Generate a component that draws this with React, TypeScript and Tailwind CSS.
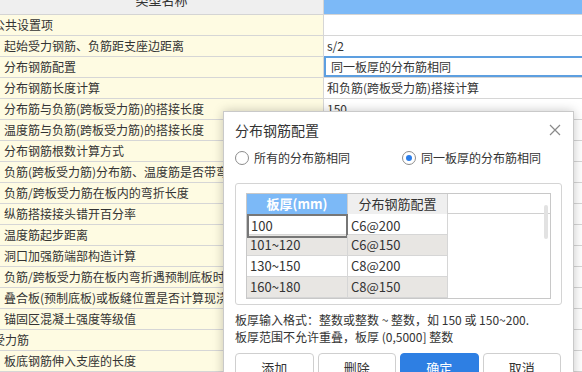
import React from "react";

const rows: { label: string; value?: string; group?: boolean; editing?: boolean }[] = [
  { label: "公共设置项", group: true },
  { label: "起始受力钢筋、负筋距支座边距离", value: "s/2" },
  { label: "分布钢筋配置", value: "同一板厚的分布筋相同", editing: true },
  { label: "分布钢筋长度计算", value: "和负筋(跨板受力筋)搭接计算" },
  { label: "分布筋与负筋(跨板受力筋)的搭接长度", value: "150" },
  { label: "温度筋与负筋(跨板受力筋)的搭接长度", value: "ll" },
  { label: "分布钢筋根数计算方式", value: "向上取整+1" },
  { label: "负筋(跨板受力筋)分布筋、温度筋是否带弯勾", value: "否" },
  { label: "负筋/跨板受力筋在板内的弯折长度", value: "板厚-2*保护层" },
  { label: "纵筋搭接接头错开百分率", value: "50%" },
  { label: "温度筋起步距离", value: "s" },
  { label: "洞口加强筋端部构造计算", value: "伸入支座" },
  { label: "负筋/跨板受力筋在板内弯折遇预制底板时", value: "是" },
  { label: "叠合板(预制底板)或板缝位置是否计算现浇", value: "是" },
  { label: "锚固区混凝土强度等级值", value: "取自身混凝土强度等级" },
  { label: "受力筋", group: true },
  { label: "板底钢筋伸入支座的长度", value: "max(ha/2,5*d)" },
];

const tableRows = [
  ["100", "C6@200"],
  ["101~120", "C6@150"],
  ["130~150", "C8@200"],
  ["160~180", "C8@150"],
];

export default function App() {
  return (
    <div className="relative w-[582px] h-[372px] overflow-hidden bg-white text-[12px] text-[#333] font-['Noto_Sans_CJK_SC','Noto_Sans',sans-serif]">
      {/* main property grid */}
      <div className="-mt-[14px] flex flex-col">
        <div className="grid grid-cols-[324px_1fr] h-[29px] border-b border-[#d4d4d4]">
          <div className="flex items-center justify-center bg-[#efefef] border-r border-[#d4d4d4] text-[13px] text-[#333]">
            类型名称
          </div>
          <div className="bg-[#7cb9f7]" />
        </div>
        {rows.map((r, i) => (
          <div key={i} className="grid grid-cols-[324px_1fr] h-[21px] border-b border-[#d6d6d6]">
            <div className="flex items-center bg-[#fefbe2] border-r border-[#d6d6d6] overflow-hidden whitespace-nowrap">
              <span className={r.group ? "-ml-[7px]" : "pl-[4px]"}>{r.label}</span>
            </div>
            {r.editing ? (
              <div className="flex items-center -mt-px -mr-[6px] h-[21px] border-2 border-[#5d9fe0] pl-[5px] whitespace-nowrap overflow-hidden">
                {r.value}
              </div>
            ) : (
              <div className="flex items-center pl-[3px] whitespace-nowrap overflow-hidden">{r.value ?? ""}</div>
            )}
          </div>
        ))}
      </div>

      {/* dialog */}
      <div className="absolute left-[223px] top-[111px] w-[351px] h-[290px] bg-white border border-[#c9c9c9] shadow-[0_0_10px_rgba(0,0,0,0.22)] flex flex-col px-[11px]">
        <div className="flex items-center justify-between h-[36px]">
          <span className="text-[14px] text-[#333]">分布钢筋配置</span>
          <svg width="12" height="12" viewBox="0 0 12 12" className="mr-[1px]">
            <path d="M1 1 L11 11 M11 1 L1 11" stroke="#8a8a8a" strokeWidth="1.2" fill="none" />
          </svg>
        </div>
        <div className="flex items-center h-[20px]">
          <label className="flex items-center w-[167px]">
            <span className="w-[14px] h-[14px] rounded-full border border-[#8c8c8c] bg-white mr-[5px]" />
            <span>所有的分布筋相同</span>
          </label>
          <label className="flex items-center">
            <span className="w-[14px] h-[14px] rounded-full border border-[#8c8c8c] bg-white mr-[5px] flex items-center justify-center">
              <span className="w-[6px] h-[6px] rounded-full bg-[#2b7de9]" />
            </span>
            <span>同一板厚的分布筋相同</span>
          </label>
        </div>
        <div className="mt-[15px] border border-[#d4d4d4] rounded-[3px] pt-[9px] px-[10px] pb-[5px]">
          <div className="relative h-[106px] border border-[#c8c8c8] overflow-hidden text-[13px]">
            <div className="grid grid-cols-[101px_100px] h-[20px] border-b border-[#d0d0d0]">
              <div className="flex items-center justify-center bg-[#7cb9f7] text-white font-bold border-r border-[#d0d0d0]">
                板厚(mm)
              </div>
              <div className="flex items-center justify-center bg-[#efefef] text-[#333] border-r border-[#d0d0d0]">
                分布钢筋配置
              </div>
            </div>
            {tableRows.map((tr, i) => (
              <div
                key={i}
                className={`grid grid-cols-[101px_100px] h-[21px] border-b border-[#d6d6d6] w-[201px] ${
                  i % 2 === 1 ? "bg-[#e8e6e3]" : "bg-white"
                }`}
              >
                <div
                  className={`flex items-center pl-[2px] ${
                    i === 0 ? "border-2 border-[#777] -mb-px" : "border-r border-[#d6d6d6] pl-[3px]"
                  }`}
                >
                  {tr[0]}
                </div>
                <div className="flex items-center pl-[3px] border-r border-[#d6d6d6]">{tr[1]}</div>
              </div>
            ))}
            <div className="absolute left-[297px] top-[11px] w-[4px] h-[34px] rounded-full bg-[#e2e2e2]" />
          </div>
        </div>
        <div className="mt-[6px] leading-[17px] text-[12px] text-[#333]">
          <div>板厚输入格式：整数或整数 ~ 整数，如 150 或 150~200.</div>
          <div>板厚范围不允许重叠，板厚 (0,5000] 整数</div>
        </div>
        <div className="mt-[8px] grid grid-cols-4 gap-[4px] pr-px">
          <button className="h-[30px] rounded-[4px] border border-[#cfcfcf] bg-white text-[13px] text-[#333]">添加</button>
          <button className="h-[30px] rounded-[4px] border border-[#cfcfcf] bg-white text-[13px] text-[#333]">删除</button>
          <button className="h-[30px] rounded-[4px] border border-[#2e7fe3] bg-[#2e7fe3] text-[13px] text-white">确定</button>
          <button className="h-[30px] rounded-[4px] border border-[#cfcfcf] bg-white text-[13px] text-[#333]">取消</button>
        </div>
      </div>
    </div>
  );
}
